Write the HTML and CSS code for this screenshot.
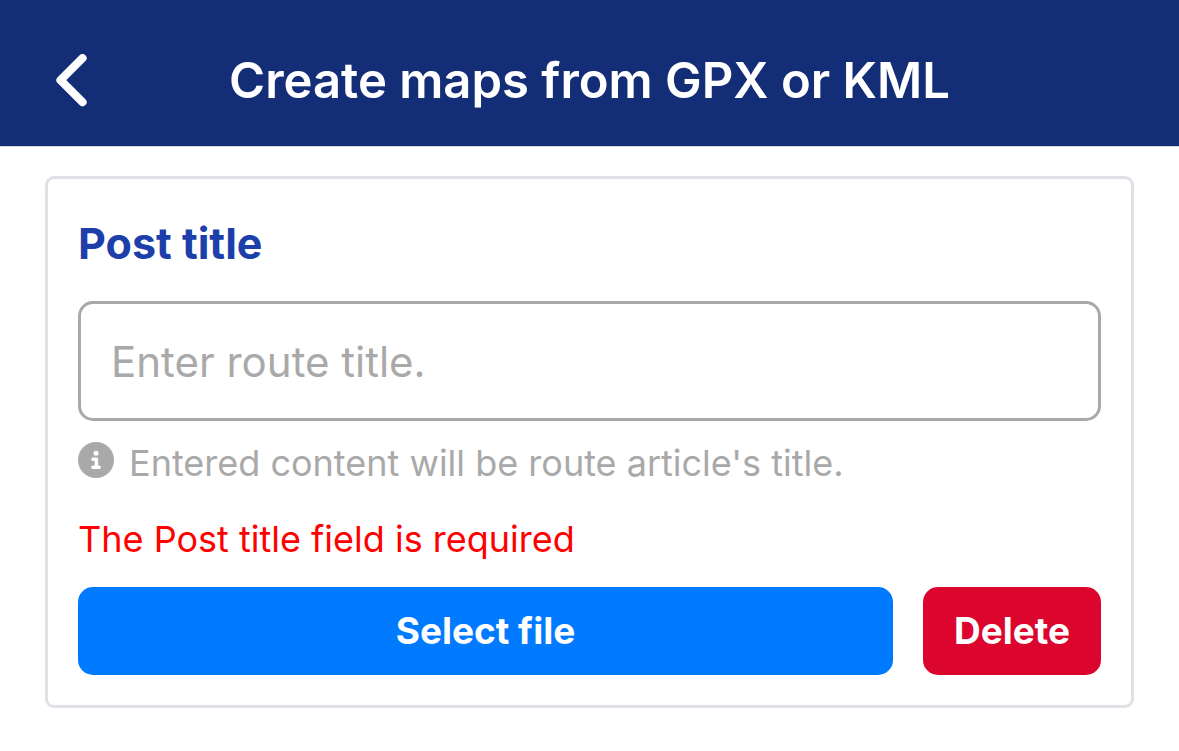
FILE: index.html
```html
<!DOCTYPE html>
<html lang="en">
<head>
<meta charset="utf-8">
<meta name="viewport" content="width=device-width, initial-scale=1">
<title>Create maps from GPX or KML</title>
<link rel="stylesheet" href="styles.css">
</head>
<body>
<header class="topbar">
  <button class="back" type="button" aria-label="Back">
    <svg class="back-icon" viewBox="0 0 32 54" aria-hidden="true"><path d="M26.500 4.200 4.500 26.200l22 22" fill="none" stroke="currentColor" stroke-width="8.200" stroke-linecap="round" stroke-linejoin="round"/></svg>
  </button>
  <h1 class="heading">Create maps from GPX or KML</h1>
</header>
<main class="content">
  <form class="card">
    <label class="label" for="title">Post title</label>
    <input class="field" id="title" type="text" placeholder="Enter route title.">
    <p class="hint">
      <svg class="info-icon" viewBox="0 0 36 36" aria-hidden="true"><circle cx="18" cy="18" r="18" fill="currentColor"/><circle cx="18" cy="11.200" r="2.500" fill="#fff"/><path d="M14.900 17.300h3.500v8M14.900 25.300h6.200" fill="none" stroke="#fff" stroke-width="3.500" stroke-linecap="round" stroke-linejoin="round"/></svg>
      <span>Entered content will be route article's title.</span>
    </p>
    <p class="error">The Post title field is required</p>
    <div class="actions">
      <button class="button select" type="button">Select file</button>
      <button class="button delete" type="button">Delete</button>
    </div>
  </form>
</main>
</body>
</html>
```
FILE: styles.css
```css
* {
  box-sizing: border-box;
}

body {
  margin: 0;
  background: #fff;
  font-family: Inter, "Liberation Sans", sans-serif;
}

.topbar {
  display: grid;
  grid-template-columns: 48px 1fr 48px;
  align-items: center;
  padding: 45px 48px 29px;
  border-bottom: 1px solid #d8d8d8;
  background: #132d76;
  color: #fff;
}

.back {
  display: flex;
  padding: 8px;
  border: 0;
  background: none;
  color: inherit;
}

.back-icon {
  width: 32px;
  height: 54px;
}

.heading {
  margin: 0;
  font-size: 49px;
  font-weight: 600;
  line-height: 72px;
  text-align: center;
  white-space: nowrap;
}

.content {
  padding: 29px 45px;
}

.card {
  display: flex;
  flex-direction: column;
  padding: 30px;
  border: 3px solid #dee2e6;
  border-radius: 9px;
}

.label {
  color: #1c3faa;
  font-size: 43px;
  font-weight: 700;
  line-height: 68px;
}

.field {
  width: 100%;
  height: 120px;
  margin-top: 24px;
  padding: 0 30px;
  border: 3px solid #a9a9a9;
  border-radius: 15px;
  background: #fff;
  font: 400 42px/50px Inter, "Liberation Sans", sans-serif;
}

.field::placeholder {
  color: #a9a9a9;
  opacity: 1;
}

.hint {
  display: flex;
  align-items: flex-start;
  gap: 15px;
  margin: 18px 0 0;
  color: #a9a9a9;
  font-size: 36px;
  line-height: 48px;
}

.info-icon {
  flex: none;
  width: 36px;
  height: 36px;
  margin-top: 3px;
}

.error {
  margin: 28px 0 24px;
  color: #f00;
  font-size: 36px;
  line-height: 48px;
}

.actions {
  display: flex;
  gap: 30px;
}

.button {
  height: 88px;
  padding: 0 31px;
  border: 0;
  border-radius: 15px;
  color: #fff;
  font: 700 37px/48px Inter, "Liberation Sans", sans-serif;
}

.select {
  flex: 1;
  background: #007aff;
}

.delete {
  background: #dc052d;
}
```
